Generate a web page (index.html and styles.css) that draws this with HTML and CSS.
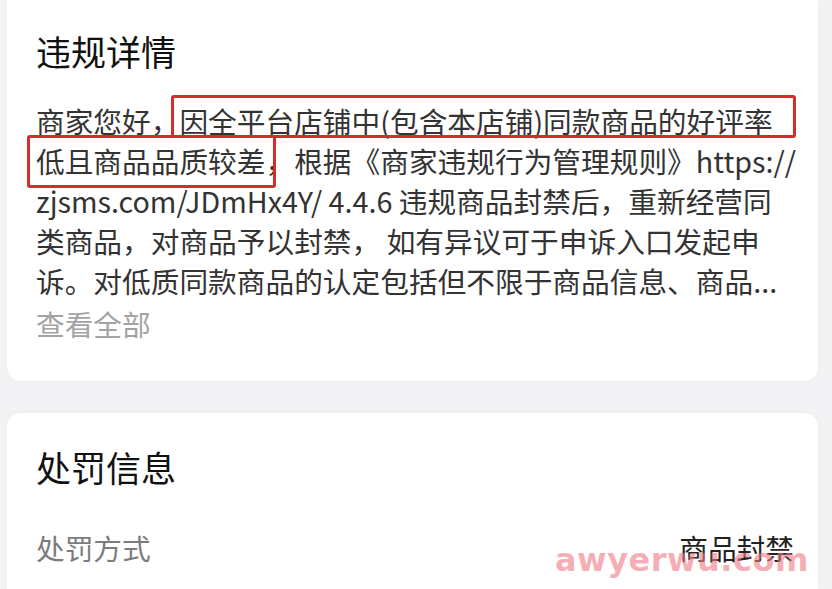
FILE: index.html
```html
<!DOCTYPE html>
<html lang="zh-CN">
<head>
<meta charset="utf-8">
<title>违规详情</title>
<link rel="stylesheet" href="styles.css">
</head>
<body>
<div class="page">
  <section class="card card-top">
    <h2 class="card-title">违规详情</h2>
    <div class="detail">
      <div class="line">商家您好，因全平台店铺中(包含本店铺)同款商品的好评率</div>
      <div class="line">低且商品品质较差，根据《商家违规行为管理规则》https://</div>
      <div class="line">zjsms.com/JDmHx4Y/ 4.4.6 违规商品封禁后，重新经营同</div>
      <div class="line">类商品，对商品予以封禁， 如有异议可于申诉入口发起申</div>
      <div class="line">诉。对低质同款商品的认定包括但不限于商品信息、商品...</div>
      <div class="more">查看全部</div>
      <span class="mark mark-one"></span>
      <span class="mark mark-two"></span>
    </div>
  </section>
  <section class="card card-bottom">
    <h2 class="card-title">处罚信息</h2>
    <div class="row">
      <span class="row-label">处罚方式</span>
      <span class="row-value">商品封禁</span>
    </div>
  </section>
  <div class="watermark">awyerwu.com</div>
</div>
</body>
</html>
```

FILE: styles.css
```css
* { box-sizing: border-box; }
html, body {
  margin: 0;
  padding: 0;
  background: #f3f3f5;
  font-family: "Noto Sans CJK SC", "Noto Sans", sans-serif;
  overflow: hidden;
}
.page {
  position: relative;
  width: 832px;
  height: 589px;
  padding: 0 14px 0 7px;
  display: flex;
  flex-direction: column;
  gap: 32px;
}
.card {
  background: #ffffff;
  padding: 0 24px 0 29px;
  box-shadow: 0 0 6px rgba(0, 0, 0, 0.03);
}
.card-top {
  position: relative;
  border-radius: 0 0 14px 14px;
  padding-top: 28px;
  padding-bottom: 34px;
}
.card-bottom {
  border-radius: 14px 14px 0 0;
  padding-top: 31px;
  flex: 1;
}
.card-title {
  margin: 0;
  font-size: 35px;
  line-height: 46px;
  font-weight: 400;
  color: #111111;
}
.detail {
  position: relative;
  margin-top: 27px;
  font-size: 28.7px;
  line-height: 40px;
  color: #333333;
}
.line { white-space: nowrap; }
.more {
  color: #a3a3a3;
  line-height: 46px;
}
.mark {
  position: absolute;
  border: 3px solid #d42b2b;
  border-radius: 3px;
}
.mark-one {
  left: 135px;
  top: -6px;
  width: 625px;
  height: 43px;
}
.mark-two {
  left: -9px;
  top: 34px;
  width: 249px;
  height: 53px;
}
.row {
  margin-top: 38px;
  display: flex;
  justify-content: space-between;
  font-size: 28.7px;
  line-height: 40px;
}
.row-label { color: #7c7c7c; }
.row-value { color: #222222; }
.watermark {
  position: absolute;
  left: 555px;
  top: 541px;
  font-family: "DejaVu Sans", sans-serif;
  font-weight: bold;
  font-size: 32px;
  letter-spacing: 0.5px;
  color: rgba(240, 120, 132, 0.6);
}
```
